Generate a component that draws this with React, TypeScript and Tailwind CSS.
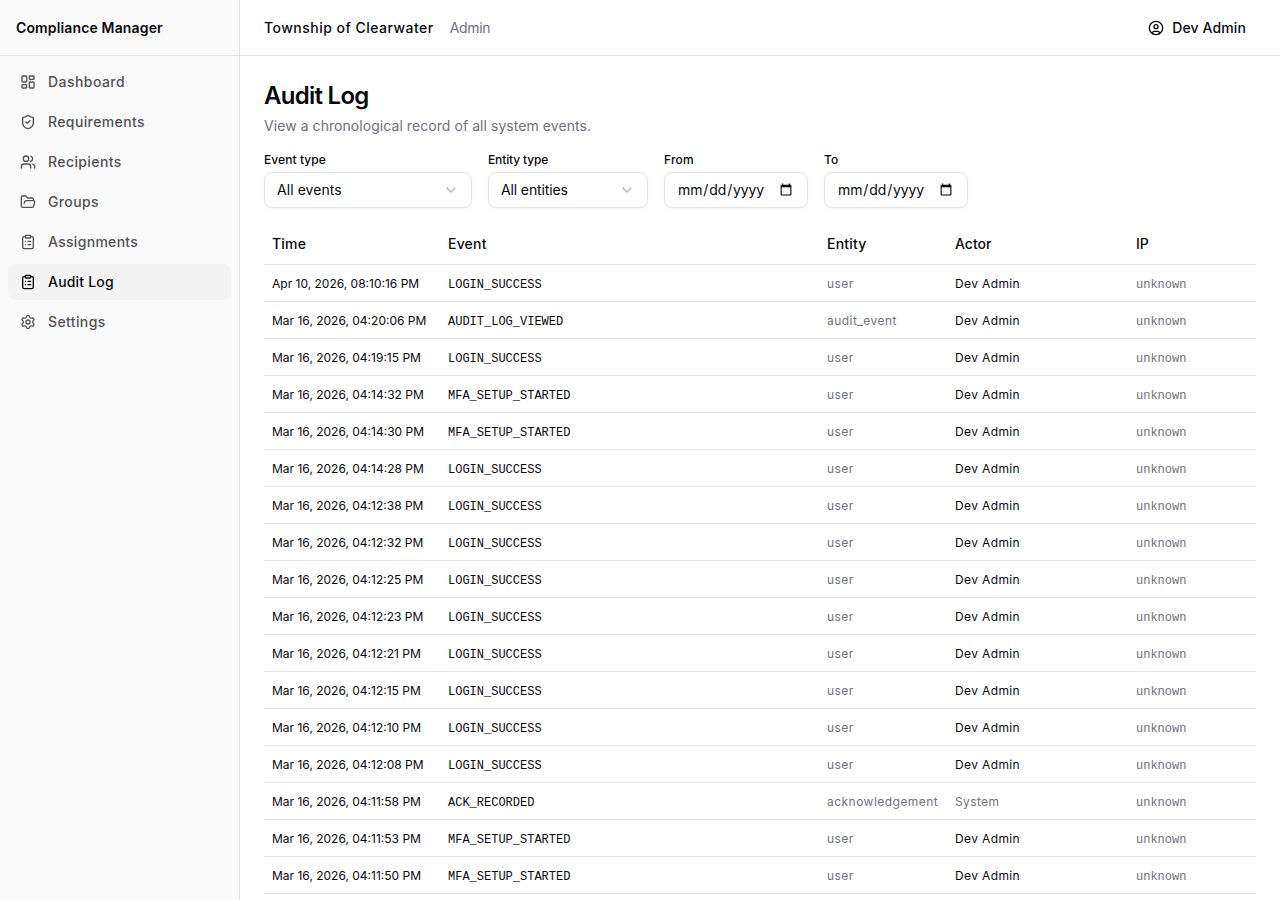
import React from 'react';
import {
  ChevronDown,
  CircleUser,
  ClipboardList,
  FolderOpen,
  LayoutDashboard,
  Settings,
  ShieldCheck,
  Users,
} from 'lucide-react';
import { clsx } from 'clsx';

const navItems = [
  { label: 'Dashboard', icon: LayoutDashboard, tracking: 'tracking-[0.45px]' },
  { label: 'Requirements', icon: ShieldCheck, tracking: 'tracking-[0.38px]' },
  { label: 'Recipients', icon: Users, tracking: 'tracking-[0.4px]' },
  { label: 'Groups', icon: FolderOpen, tracking: 'tracking-[0.38px]' },
  { label: 'Assignments', icon: ClipboardList, tracking: 'tracking-[0.3px]' },
  { label: 'Audit Log', icon: ClipboardList, tracking: 'tracking-[0.2px]', active: true },
  { label: 'Settings', icon: Settings, tracking: 'tracking-[0.38px]' },
];

interface AuditEvent {
  time: string;
  event: string;
  entity: string;
  actor?: string;
}

const events: AuditEvent[] = [
  { time: 'Apr 10, 2026, 08:10:16 PM', event: 'LOGIN_SUCCESS', entity: 'user', actor: 'Dev Admin' },
  { time: 'Mar 16, 2026, 04:20:06 PM', event: 'AUDIT_LOG_VIEWED', entity: 'audit_event', actor: 'Dev Admin' },
  { time: 'Mar 16, 2026, 04:19:15 PM', event: 'LOGIN_SUCCESS', entity: 'user', actor: 'Dev Admin' },
  { time: 'Mar 16, 2026, 04:14:32 PM', event: 'MFA_SETUP_STARTED', entity: 'user', actor: 'Dev Admin' },
  { time: 'Mar 16, 2026, 04:14:30 PM', event: 'MFA_SETUP_STARTED', entity: 'user', actor: 'Dev Admin' },
  { time: 'Mar 16, 2026, 04:14:28 PM', event: 'LOGIN_SUCCESS', entity: 'user', actor: 'Dev Admin' },
  { time: 'Mar 16, 2026, 04:12:38 PM', event: 'LOGIN_SUCCESS', entity: 'user', actor: 'Dev Admin' },
  { time: 'Mar 16, 2026, 04:12:32 PM', event: 'LOGIN_SUCCESS', entity: 'user', actor: 'Dev Admin' },
  { time: 'Mar 16, 2026, 04:12:25 PM', event: 'LOGIN_SUCCESS', entity: 'user', actor: 'Dev Admin' },
  { time: 'Mar 16, 2026, 04:12:23 PM', event: 'LOGIN_SUCCESS', entity: 'user', actor: 'Dev Admin' },
  { time: 'Mar 16, 2026, 04:12:21 PM', event: 'LOGIN_SUCCESS', entity: 'user', actor: 'Dev Admin' },
  { time: 'Mar 16, 2026, 04:12:15 PM', event: 'LOGIN_SUCCESS', entity: 'user', actor: 'Dev Admin' },
  { time: 'Mar 16, 2026, 04:12:10 PM', event: 'LOGIN_SUCCESS', entity: 'user', actor: 'Dev Admin' },
  { time: 'Mar 16, 2026, 04:12:08 PM', event: 'LOGIN_SUCCESS', entity: 'user', actor: 'Dev Admin' },
  { time: 'Mar 16, 2026, 04:11:58 PM', event: 'ACK_RECORDED', entity: 'acknowledgement' },
  { time: 'Mar 16, 2026, 04:11:53 PM', event: 'MFA_SETUP_STARTED', entity: 'user', actor: 'Dev Admin' },
  { time: 'Mar 16, 2026, 04:11:50 PM', event: 'MFA_SETUP_STARTED', entity: 'user', actor: 'Dev Admin' },
];

const Sidebar: React.FC = () => (
  <aside className="flex w-60 shrink-0 flex-col border-r border-[#e4e4e7] bg-[#fafafa]">
    <div className="flex h-14 shrink-0 items-center border-b border-[#e4e4e7] px-4">
      <span className="text-sm font-semibold tracking-[0.14px]">Compliance Manager</span>
    </div>
    <nav className="flex flex-col gap-1 p-2">
      {navItems.map(({ label, icon: Icon, tracking, active }) => (
        <a
          key={label}
          className={clsx(
            'flex h-9 items-center gap-3 rounded-lg px-3 text-sm font-medium',
            tracking,
            active ? 'bg-[#f4f4f5] text-[#09090b]' : 'text-[#525252]'
          )}
        >
          <Icon className="size-4" />
          {label}
        </a>
      ))}
    </nav>
  </aside>
);

const SelectField: React.FC<{ label: string; value: string; className: string }> = ({ label, value, className }) => (
  <div className={clsx('flex flex-col gap-1', className)}>
    <label className="text-xs font-medium">{label}</label>
    <button className="flex h-9 items-center justify-between rounded-lg border border-[#e4e4e7] px-3 text-sm shadow-xs">
      {value}
      <ChevronDown className="size-4 text-[#71717a] opacity-50" />
    </button>
  </div>
);

const DateField: React.FC<{ label: string }> = ({ label }) => (
  <div className="flex w-36 flex-col gap-1">
    <label className="text-xs font-medium tracking-[0.2px]">{label}</label>
    <input
      type="date"
      className="h-9 w-full rounded-lg border border-[#e4e4e7] px-3 py-1 text-sm tracking-[-0.12px] shadow-xs"
    />
  </div>
);

export default function App() {
  return (
    <div className="flex h-screen overflow-hidden bg-white font-['Inter',sans-serif] text-[#09090b] antialiased">
      <Sidebar />
      <div className="flex min-w-0 flex-1 flex-col">
        <header className="flex h-14 shrink-0 items-center justify-between border-b border-[#e4e4e7] px-6">
          <div className="flex items-center gap-4 text-sm">
            <span className="font-medium tracking-[0.48px]">Township of Clearwater</span>
            <span className="tracking-[-0.3px] text-[#71717a]">Admin</span>
          </div>
          <button className="flex h-8 items-center gap-2 px-2.5 text-sm font-medium tracking-[0.12px]">
            <CircleUser className="size-4" />
            Dev Admin
          </button>
        </header>

        <main className="flex-1 overflow-hidden p-6">
          <h1 className="text-2xl font-semibold tracking-[-0.72px]">Audit Log</h1>
          <p className="mt-1 text-sm tracking-[0.06px] text-[#71717a]">View a chronological record of all system events.</p>

          {/* Filters */}
          <div className="mt-4 flex items-end gap-4">
            <SelectField label="Event type" value="All events" className="w-52 tracking-[0.07px]" />
            <SelectField label="Entity type" value="All entities" className="w-40 tracking-[-0.13px]" />
            <DateField label="From" />
            <DateField label="To" />
          </div>

          <table className="mt-4 w-full table-fixed text-left text-xs">
            <colgroup>
              <col className="w-[176px]" />
              <col className="w-[379px]" />
              <col className="w-[128px]" />
              <col className="w-[181px]" />
              <col />
            </colgroup>
            <thead>
              <tr className="h-10 border-b border-[#e4e4e7] text-sm tracking-[0.2px]">
                <th className="px-2 font-medium">Time</th>
                <th className="px-2 font-medium">Event</th>
                <th className="px-2 font-medium">Entity</th>
                <th className="px-2 font-medium tracking-normal">Actor</th>
                <th className="px-2 font-medium tracking-normal">IP</th>
              </tr>
            </thead>
            <tbody>
              {events.map((row) => (
                <tr key={row.time} className="h-[37px] whitespace-nowrap border-b border-[#e4e4e7]">
                  <td className="px-2 pt-0.5">{row.time}</td>
                  <td className="px-2 pt-1 font-['Liberation_Mono',monospace]">{row.event}</td>
                  <td className="px-2 pt-0.5 tracking-[0.47px] text-[#71717a]">{row.entity}</td>
                  <td className={clsx('px-2 pt-0.5 tracking-[0.37px]', !row.actor && 'text-[#71717a]')}>
                    {row.actor ?? 'System'}
                  </td>
                  <td className="px-2 pt-1 font-['Liberation_Mono',monospace] text-[#71717a]">unknown</td>
                </tr>
              ))}
            </tbody>
          </table>
        </main>
      </div>
    </div>
  );
}
